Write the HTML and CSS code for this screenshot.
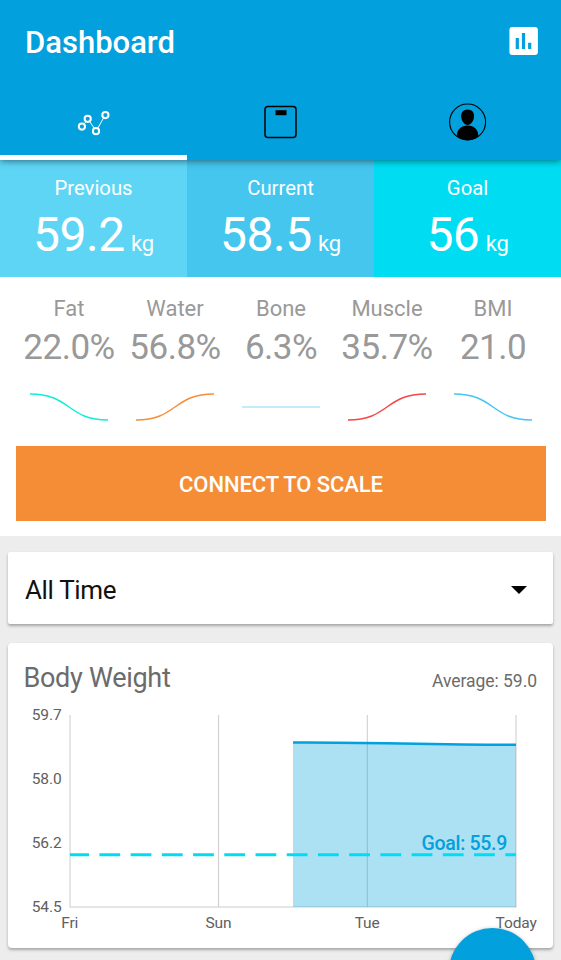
FILE: index.html
```html
<!DOCTYPE html>
<html lang="en">
<head>
    <meta charset="UTF-8">
    <meta name="viewport" content="width=device-width, initial-scale=1.0">
    <title>Dashboard</title>
    <link rel="stylesheet" href="styles.css">
</head>
<body>
    <header class="header">
        <div class="toolbar">
            <h1>Dashboard</h1>
            <svg class="chart-icon" width="30" height="30" viewBox="0 0 30 30">
                <rect x="0.4" y="1" width="28.5" height="28" rx="3" fill="#fff"/>
                <path d="M6.7 12h3.2v11H6.7zM12.9 7h3.2v16h-3.2zM19.1 16.7h3.2V23h-3.2z" fill="#02a0dc"/>
            </svg>
        </div>
        <nav class="tabs">
            <div class="tab active">
                <svg width="34" height="26" viewBox="0 0 34 26" fill="none" stroke="#fff">
                    <path d="M6.9 14.2l2.4-3M12.6 11.5l5 7.3M20.5 18.7l6.2-11" stroke-width="1"/>
                    <g stroke-width="2">
                        <circle cx="4.9" cy="16.6" r="3.1"/>
                        <circle cx="10.7" cy="8.8" r="3.1"/>
                        <circle cx="19" cy="21.2" r="3.1"/>
                        <circle cx="28.4" cy="5.1" r="3.1"/>
                    </g>
                </svg>
            </div>
            <div class="tab">
                <svg width="34" height="34" viewBox="0 0 34 34">
                    <rect x="1" y="1.6" width="31" height="31" rx="3" fill="none" stroke="#000" stroke-width="1.5"/>
                    <rect x="11.5" y="5.2" width="11" height="5" fill="#000"/>
                </svg>
            </div>
            <div class="tab">
                <svg width="38" height="38" viewBox="0 0 38 38">
                    <circle cx="18.6" cy="19" r="18" fill="none" stroke="#000" stroke-width="1.1"/>
                    <path d="M18.6 6.5c3.9 0 6.5 2.8 6.5 6.5 0 4.3-3 9-6.5 9s-6.500-4.700-6.500-9c0-3.700 2.600-6.500 6.500-6.500z"/>
                    <path d="M7.800 33.500c0-6.500 4.100-10.900 10.800-10.900s10.800 4.400 10.800 10.900c-6 5-15.600 5-21.600 0z"/>
                </svg>
            </div>
        </nav>
    </header>

    <section class="weights">
        <div class="weight previous">
            <div class="label">Previous</div>
            <div class="value">59.2 <span>kg</span></div>
        </div>
        <div class="weight current">
            <div class="label">Current</div>
            <div class="value">58.5 <span>kg</span></div>
        </div>
        <div class="weight goal">
            <div class="label">Goal</div>
            <div class="value">56 <span>kg</span></div>
        </div>
    </section>

    <section class="summary">
        <div class="metrics">
            <div class="metric">
                <div class="name">Fat</div>
                <div class="amount">22.0%</div>
                <svg class="trend" viewBox="0 0 80 30"><path d="M1 2C42 2 38 28 79 28" stroke="#12ecd8"/></svg>
            </div>
            <div class="metric">
                <div class="name">Water</div>
                <div class="amount">56.8%</div>
                <svg class="trend" viewBox="0 0 80 30"><path d="M1 28C42 28 38 2 79 2" stroke="#f58e38"/></svg>
            </div>
            <div class="metric">
                <div class="name">Bone</div>
                <div class="amount">6.3%</div>
                <svg class="trend" viewBox="0 0 80 30"><path d="M1 15H79" stroke="#b2e4fa"/></svg>
            </div>
            <div class="metric">
                <div class="name">Muscle</div>
                <div class="amount">35.7%</div>
                <svg class="trend" viewBox="0 0 80 30"><path d="M1 28C42 28 38 2 79 2" stroke="#f34646"/></svg>
            </div>
            <div class="metric">
                <div class="name">BMI</div>
                <div class="amount">21.0</div>
                <svg class="trend" viewBox="0 0 80 30"><path d="M1 2C42 2 38 28 79 28" stroke="#45c6f0"/></svg>
            </div>
        </div>
        <button class="connect">CONNECT TO SCALE</button>
    </section>

    <main class="content">
        <div class="card period">
            <span>All Time</span>
            <svg width="16" height="8" viewBox="0 0 16 8"><path d="M0 0h16L8 8z"/></svg>
        </div>
        <div class="card chart-card">
            <div class="chart-header">
                <h2>Body Weight</h2>
                <span class="average">Average: 59.0</span>
            </div>
            <svg class="chart" width="545" height="240" viewBox="0 0 545 240">
                <!-- grid -->
                <path d="M62 10v192M210.6 10v192M359.3 10v192M508 10v192M61.5 202H508.5" stroke="#ccc" fill="none"/>
                <!-- weight -->
                <path d="M285 37.5C360 37 420 40 508 39.8V202H285z" fill="#02a0dc" fill-opacity="0.33"/>
                <path d="M285 37.5C360 37 420 40 508 39.8" stroke="#02a0dc" stroke-width="2.5" fill="none"/>
                <!-- goal -->
                <path d="M62 149.7H508" stroke="#00ddf3" stroke-width="3" stroke-dasharray="20.8 10.42" stroke-dashoffset="1.8"/>
                <text class="goal-label" x="499" y="145" text-anchor="end">Goal: 55.9</text>
                <g class="axis" text-anchor="end">
                    <text x="53.5" y="15">59.7</text>
                    <text x="53.5" y="79">58.0</text>
                    <text x="53.5" y="142.5">56.2</text>
                    <text x="53.5" y="206.5">54.5</text>
                </g>
                <g class="axis" text-anchor="middle">
                    <text x="61.7" y="223">Fri</text>
                    <text x="210.5" y="223">Sun</text>
                    <text x="359.2" y="223">Tue</text>
                    <text x="508.2" y="223">Today</text>
                </g>
            </svg>
        </div>
    </main>
    <div class="fab"></div>
</body>
</html>
```

FILE: styles.css
```css
* {
    box-sizing: border-box;
}
body {
    margin: 0;
    height: 960px;
    overflow: hidden;
    position: relative;
    font-family: Roboto, "Liberation Sans", sans-serif;
    background: #ededed;
}
svg {
    display: block;
}
.header {
    position: relative;
    height: 160px;
    background: #02a0dc;
    box-shadow: 0 1px 7px rgba(0, 0, 0, 0.5);
    z-index: 1;
}
.toolbar {
    display: flex;
    justify-content: space-between;
    align-items: center;
    height: 84px;
    padding: 0 22px 0 25px;
}
h1 {
    margin: 0;
    font-size: 31px;
    font-weight: 500;
    color: #fff;
}
.chart-icon {
    margin-top: -2px;
}
.tabs {
    display: grid;
    grid-template-columns: repeat(3, 1fr);
    height: 76px;
}
.tab {
    display: flex;
    justify-content: center;
    align-items: center;
    border-bottom: 5px solid transparent;
    padding-top: 5px;
}
.tab.active {
    border-bottom-color: #fff;
    padding-top: 6px;
}
.weights {
    display: grid;
    grid-template-columns: repeat(3, 1fr);
    height: 117px;
}
.weight {
    padding-top: 16px;
    text-align: center;
    color: #fff;
}
.previous {
    background: #5ed5f5;
}
.current {
    background: #44c6ee;
}
.goal {
    background: #00ddf3;
}
.label {
    font-size: 20.3px;
    line-height: 24px;
}
.value {
    font-size: 48px;
    line-height: 56px;
    margin-top: 7px;
    white-space: nowrap;
    letter-spacing: -0.5px;
    word-spacing: -5px;
}
.value span {
    font-size: 22px;
    letter-spacing: -0.2px;
}
.summary {
    height: 259px;
    padding: 19px 15px 0 16px;
    background: #fff;
}
.metrics {
    display: grid;
    grid-template-columns: repeat(5, 1fr);
    text-align: center;
    color: #999;
}
.name {
    font-size: 22px;
    line-height: 26px;
}
.amount {
    font-size: 35px;
    line-height: 42px;
    margin-top: 5px;
    letter-spacing: -0.5px;
}
.trend {
    width: 80px;
    height: 30px;
    margin: 23px auto 0;
    fill: none;
    stroke-width: 1.5;
}
.connect {
    display: block;
    width: 100%;
    height: 75px;
    margin-top: 24px;
    padding: 2px 0 0;
    border: none;
    background: #f58d36;
    color: #fff;
    font-family: inherit;
    font-size: 22px;
    font-weight: 500;
    letter-spacing: -0.1px;
}
.content {
    padding: 16px 8px 0;
}
.card {
    background: #fff;
    border-radius: 2px;
    box-shadow: 0 2px 3px rgba(0, 0, 0, 0.3);
}
.period {
    display: flex;
    justify-content: space-between;
    align-items: center;
    height: 72px;
    padding: 4px 26px 0 17px;
    font-size: 26px;
    letter-spacing: -0.35px;
    color: #111;
}
.chart-card {
    height: 305px;
    margin-top: 19px;
    border-radius: 4px;
}
.chart-header {
    display: flex;
    justify-content: space-between;
    align-items: baseline;
    height: 62px;
    padding: 19px 16px 0 15.5px;
    color: #6b6b6b;
}
h2 {
    margin: 0;
    font-size: 27px;
    font-weight: 400;
    letter-spacing: -0.3px;
}
.average {
    font-size: 17.5px;
    letter-spacing: -0.05px;
}
.axis {
    font-size: 15.5px;
    letter-spacing: -0.1px;
    fill: #606060;
}
.goal-label {
    font-size: 19.5px;
    font-weight: 500;
    letter-spacing: -0.3px;
    fill: #02a0dc;
}
.fab {
    position: absolute;
    left: 449px;
    top: 928px;
    width: 87px;
    height: 87px;
    border-radius: 50%;
    background: #02a0dc;
    box-shadow: 0 1px 4px rgba(0, 0, 0, 0.3);
    z-index: 2;
}
```
